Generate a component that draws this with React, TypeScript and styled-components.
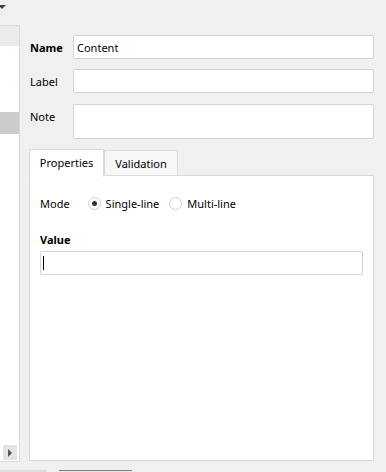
import styled, { createGlobalStyle } from "styled-components";

const GlobalStyle = createGlobalStyle`
  html, body {
    margin: 0;
    padding: 0;
    background: #f0f0f0;
  }
  body {
    font-family: "Noto Sans", "Liberation Sans", sans-serif;
    font-size: 11px;
    color: #000;
  }
`;

const App: React.FC = () => {
  return (
    <>
      <GlobalStyle />
      <Window>
        <Main>
          <LeftPane>
            <PaneHeader>
              <DropArrow />
            </PaneHeader>
            <TreeList>
              <TreeRow $tone="#ebebeb" />
              <Spacer $h={66} />
              <TreeRow $tone="#cccccc" $h={22} />
              <TreeFill />
              <ScrollBar>
                <ScrollArrow />
              </ScrollBar>
            </TreeList>
          </LeftPane>

          <RightPane>
            <FieldRow>
              <FieldLabel $bold>Name</FieldLabel>
              <TextInput defaultValue="Content" />
            </FieldRow>
            <FieldRow $mt={10}>
              <FieldLabel>Label</FieldLabel>
              <TextInput />
            </FieldRow>
            <FieldRow $mt={11} $top>
              <FieldLabel $top>Note</FieldLabel>
              <NoteArea />
            </FieldRow>

            <TabBar>
              <Tab $active>Properties</Tab>
              <Tab>Validation</Tab>
            </TabBar>
            <TabPanel>
              <ModeRow>
                <span>Mode</span>
                <RadioGroup>
                  <RadioOption>
                    <RadioCircle $checked />
                    Single-line
                  </RadioOption>
                  <RadioOption>
                    <RadioCircle />
                    Multi-line
                  </RadioOption>
                </RadioGroup>
              </ModeRow>
              <ValueLabel>Value</ValueLabel>
              <ValueInput>
                <Caret />
              </ValueInput>
            </TabPanel>
          </RightPane>
        </Main>

        <BottomStrip>
          <DockTab $width={47} />
          <DockTab $width={73} $active />
        </BottomStrip>
      </Window>
    </>
  );
};

export default App;

const Window = styled.div`
  width: 386px;
  height: 472px;
  display: flex;
  flex-direction: column;
  overflow: hidden;
  background: #f0f0f0;
`;

const Main = styled.div`
  display: flex;
  height: 462px;
`;

const LeftPane = styled.div`
  width: 21px;
  display: flex;
  flex-direction: column;
`;

const PaneHeader = styled.div`
  height: 25px;
  position: relative;
`;

const DropArrow = styled.div`
  position: absolute;
  left: -2px;
  top: 5px;
  width: 0;
  height: 0;
  border-left: 4px solid transparent;
  border-right: 4px solid transparent;
  border-top: 4px solid #404040;
`;

const TreeList = styled.div`
  flex: 1;
  display: flex;
  flex-direction: column;
  background: #fff;
  border-top: 1px solid #d9d9d9;
  border-right: 1px solid #d9d9d9;
  border-bottom: 1px solid #d9d9d9;
`;

const TreeRow = styled.div<{ $tone: string; $h?: number }>`
  height: ${(p) => p.$h ?? 20}px;
  width: 19px;
  background: ${(p) => p.$tone};
`;

const Spacer = styled.div<{ $h: number }>`
  height: ${(p) => p.$h}px;
`;

const TreeFill = styled.div`
  flex: 1;
`;

const ScrollBar = styled.div`
  height: 15px;
  margin: 0 2px 1px 3px;
  background: #e3e3e3;
  display: flex;
  align-items: center;
  justify-content: center;
`;

const ScrollArrow = styled.div`
  width: 0;
  height: 0;
  border-top: 4px solid transparent;
  border-bottom: 4px solid transparent;
  border-left: 4px solid #555;
`;

const RightPane = styled.div`
  flex: 1;
  display: flex;
  flex-direction: column;
  padding: 35px 12px 0 9px;
`;

const FieldRow = styled.div<{ $top?: boolean; $mt?: number }>`
  display: flex;
  align-items: ${(p) => (p.$top ? "flex-start" : "center")};
  margin-top: ${(p) => p.$mt ?? 0}px;
`;

const FieldLabel = styled.label<{ $bold?: boolean; $top?: boolean }>`
  width: 43px;
  padding-left: 1px;
  font-weight: ${(p) => (p.$bold ? 700 : 400)};
  margin-top: ${(p) => (p.$top ? "5px" : "0")};
`;

const TextInput = styled.input`
  flex: 1;
  height: 24px;
  box-sizing: border-box;
  border: 1px solid #d4d4d4;
  border-radius: 2px;
  background: #fff;
  padding: 0 3px;
  font: inherit;
  color: #000;
  outline: none;
`;

const NoteArea = styled.div`
  flex: 1;
  height: 35px;
  box-sizing: border-box;
  border: 1px solid #d4d4d4;
  border-radius: 2px;
  background: #fff;
`;

const TabBar = styled.div`
  margin-top: 10px;
  height: 26px;
  display: flex;
  align-items: flex-end;
  position: relative;
  z-index: 1;
`;

const Tab = styled.div<{ $active?: boolean }>`
  box-sizing: border-box;
  height: ${(p) => (p.$active ? 28 : 25)}px;
  width: ${(p) => (p.$active ? 75 : 74)}px;
  border: 1px solid #d9d9d9;
  border-bottom: ${(p) => (p.$active ? "1px solid #fff" : "none")};
  background: ${(p) => (p.$active ? "#fff" : "#f7f7f7")};
  margin-bottom: ${(p) => (p.$active ? -2 : 0)}px;
  display: flex;
  align-items: center;
  justify-content: center;
  padding-bottom: ${(p) => (p.$active ? 2 : 0)}px;
`;

const TabPanel = styled.div`
  height: 286px;
  box-sizing: border-box;
  border: 1px solid #d9d9d9;
  background: #fff;
  padding: 19px 10px 0 10px;
  display: flex;
  flex-direction: column;
`;

const ModeRow = styled.div`
  display: flex;
  align-items: center;
  height: 16px;
  gap: 18px;
`;

const RadioGroup = styled.div`
  display: flex;
  gap: 10px;
`;

const RadioOption = styled.label`
  display: flex;
  align-items: center;
  gap: 5px;
`;

const RadioCircle = styled.span<{ $checked?: boolean }>`
  width: 13px;
  height: 13px;
  box-sizing: border-box;
  border-radius: 50%;
  border: 1px solid #cfcfcf;
  background: #fff;
  display: flex;
  align-items: center;
  justify-content: center;
  &::after {
    content: "";
    width: 5px;
    height: 5px;
    border-radius: 50%;
    background: ${(p) => (p.$checked ? "#333" : "transparent")};
  }
`;

const ValueLabel = styled.div`
  font-weight: 700;
  margin-top: 20px;
  height: 16px;
  display: flex;
  align-items: center;
`;

const ValueInput = styled.div`
  margin-top: 4px;
  width: 323px;
  height: 24px;
  box-sizing: border-box;
  border: 1px solid #d4d4d4;
  border-radius: 2px;
  background: #fff;
  display: flex;
  align-items: center;
  padding-left: 2px;
`;

const Caret = styled.span`
  width: 1px;
  height: 14px;
  background: #000;
`;

const BottomStrip = styled.div`
  height: 10px;
  display: flex;
  align-items: flex-end;
  gap: 12px;
`;

const DockTab = styled.div<{ $width: number; $active?: boolean }>`
  width: ${(p) => p.$width}px;
  height: 2px;
  box-sizing: border-box;
  background: ${(p) => (p.$active ? "#e6e6e6" : "#dedede")};
  border-top: 1px solid ${(p) => (p.$active ? "#808080" : "#dedede")};
`;
